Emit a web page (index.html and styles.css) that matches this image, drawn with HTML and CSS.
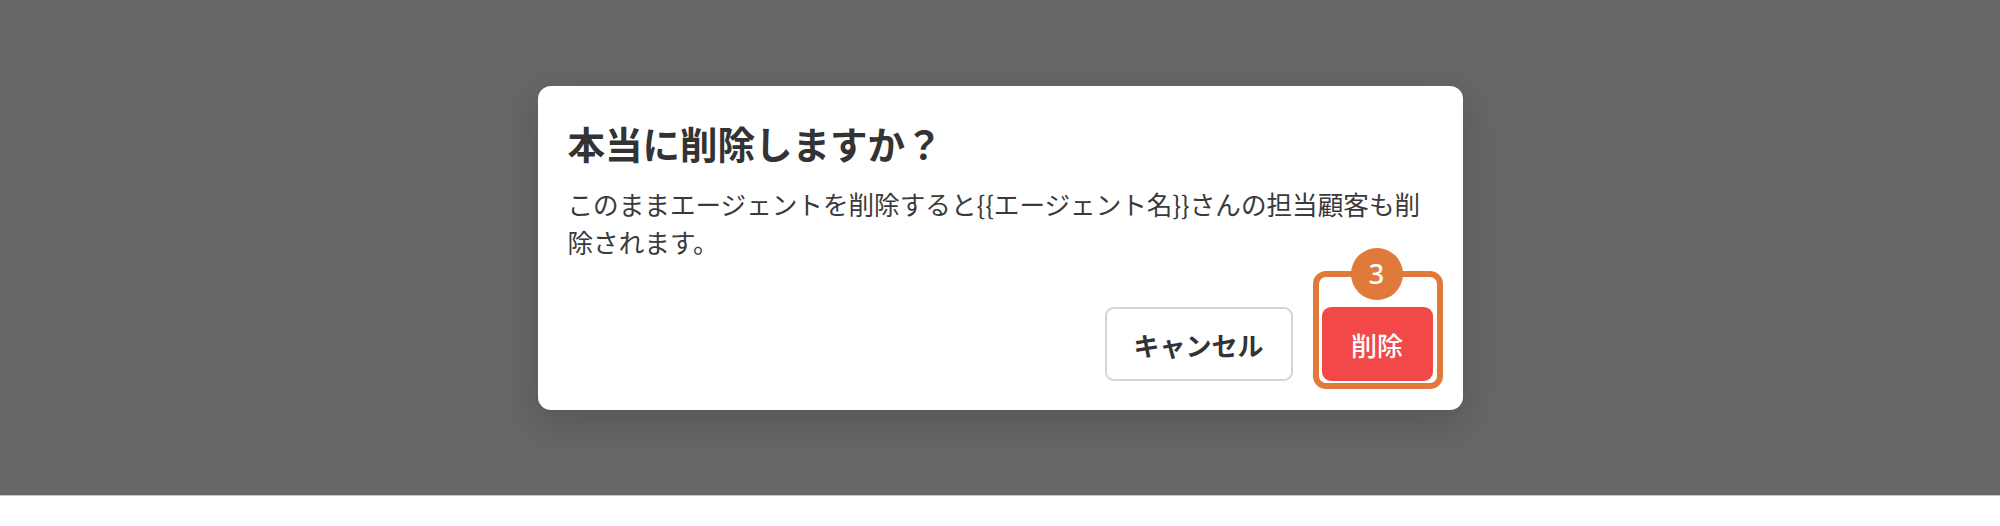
FILE: index.html
```html
<!DOCTYPE html>
<html lang="ja">
<head>
<meta charset="utf-8">
<link rel="stylesheet" href="styles.css">
</head>
<body>
<div class="overlay">
  <div class="dialog">
    <h2 class="title">本当に削除しますか？</h2>
    <p class="message">このままエージェントを削除すると{{エージェント名}}さんの担当顧客も削除されます。</p>
    <div class="actions">
      <button class="btn btn-cancel">キャンセル</button>
      <div class="highlight-wrap">
        <button class="btn btn-delete">削除</button>
        <div class="highlight"><span class="badge">3</span></div>
      </div>
    </div>
  </div>
</div>
<div class="page-bottom"></div>
</body>
</html>
```
FILE: styles.css
```css
html, body {
  margin: 0;
  padding: 0;
  background: #ffffff;
  font-family: "Noto Sans CJK JP", "Noto Sans", sans-serif;
}

.overlay {
  height: 496px;
  box-sizing: border-box;
  background: #676767;
  display: flex;
  justify-content: center;
  align-items: flex-start;
  padding-top: 86px;
  border-bottom: 1px solid #c8c8c8;
}

.dialog {
  width: 925px;
  box-sizing: border-box;
  background: #ffffff;
  border-radius: 13px;
  padding: 30px 30px 29px 30px;
  box-shadow: 0 12px 40px rgba(0, 0, 0, 0.18);
}

.title {
  margin: 0;
  font-size: 37.5px;
  line-height: 54px;
  font-weight: 700;
  color: #333333;
}

.message {
  margin: 15px 0 0 0;
  font-size: 25.6px;
  line-height: 38px;
  color: #3a3a3a;
  font-weight: 400;
}

.actions {
  display: flex;
  justify-content: flex-end;
  align-items: center;
  gap: 29px;
  margin-top: 46px;
}

.btn {
  font-family: "Noto Sans CJK JP", "Noto Sans", sans-serif;
  height: 74px;
  box-sizing: border-box;
  border-radius: 9px;
  font-size: 26px;
  cursor: pointer;
  padding: 0;
  white-space: nowrap;
}

.btn-cancel {
  width: 188px;
  background: #ffffff;
  border: 2px solid #d4d4d4;
  color: #333333;
  font-weight: 700;
}

.btn-delete {
  width: 111px;
  background: #f24848;
  border: none;
  color: #ffffff;
  font-weight: 500;
  display: block;
}

.highlight-wrap {
  position: relative;
}

.highlight {
  position: absolute;
  top: -36px;
  left: -9px;
  right: -10px;
  bottom: -8px;
  border: 6px solid #e07a3b;
  border-radius: 13px;
  pointer-events: none;
}

.badge {
  position: absolute;
  top: -29px;
  left: 50%;
  margin-left: -27px;
  width: 52px;
  height: 52px;
  border-radius: 50%;
  background: #e07a3b;
  color: #ffffff;
  font-family: "Noto Sans", sans-serif;
  font-weight: 500;
  font-size: 27px;
  line-height: 52px;
  text-align: center;
}

.page-bottom {
  height: 30px;
}
```
